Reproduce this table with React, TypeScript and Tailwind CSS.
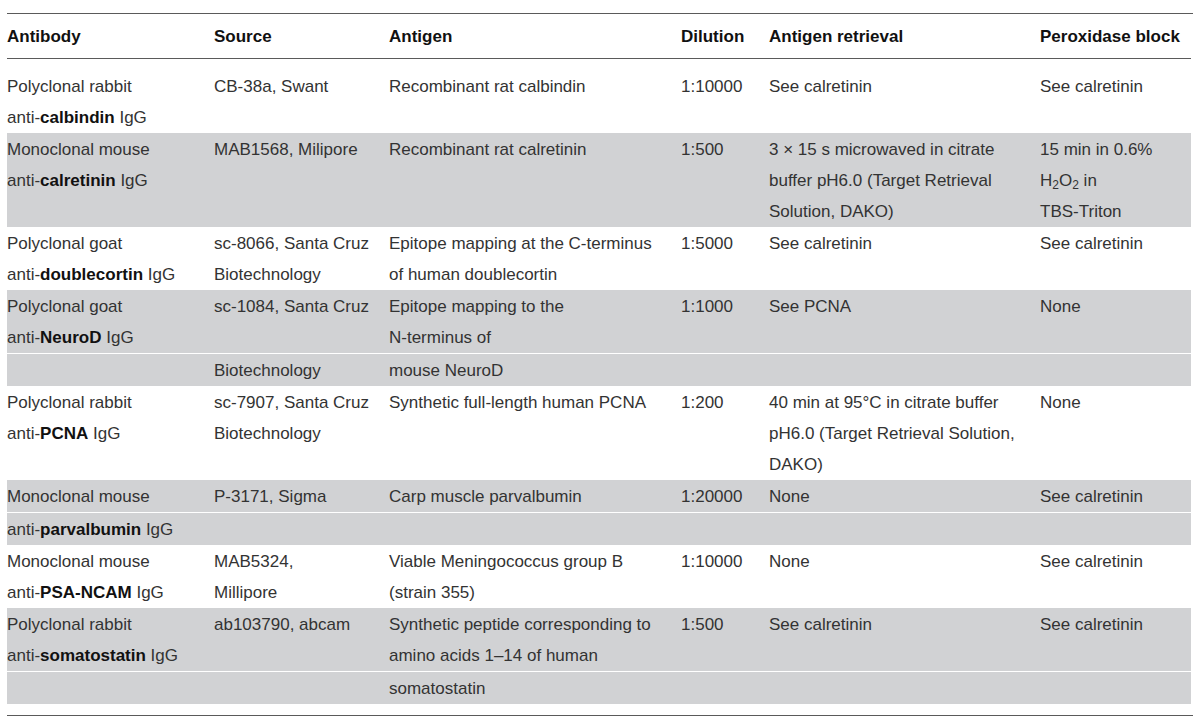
import type { ReactNode } from "react";

type Cell = ReactNode[];
type SubRow = Cell[];

interface Row {
  shaded: boolean;
  parts: SubRow[];
}

const COLS = [207, 175, 292, 88, 271, 151];
const HEADERS = ["Antibody", "Source", "Antigen", "Dilution", "Antigen retrieval", "Peroxidase block"];

const anti = (name: string) => (
  <>
    anti-<b className="font-bold text-[#111]">{name}</b> IgG
  </>
);

const h2o2 = (
  <>
    H<sub className="text-[12px]">2</sub>O<sub className="text-[12px]">2</sub> in
  </>
);

const ROWS: Row[] = [
  {
    shaded: false,
    parts: [
      [
        ["Polyclonal rabbit", anti("calbindin")],
        ["CB-38a, Swant"],
        ["Recombinant rat calbindin"],
        ["1:10000"],
        ["See calretinin"],
        ["See calretinin"],
      ],
    ],
  },
  {
    shaded: true,
    parts: [
      [
        ["Monoclonal mouse", anti("calretinin")],
        ["MAB1568, Milipore"],
        ["Recombinant rat calretinin"],
        ["1:500"],
        ["3 × 15 s microwaved in citrate", "buffer pH6.0 (Target Retrieval", "Solution, DAKO)"],
        ["15 min in 0.6%", h2o2, "TBS-Triton"],
      ],
    ],
  },
  {
    shaded: false,
    parts: [
      [
        ["Polyclonal goat", anti("doublecortin")],
        ["sc-8066, Santa Cruz", "Biotechnology"],
        ["Epitope mapping at the C-terminus", "of human doublecortin"],
        ["1:5000"],
        ["See calretinin"],
        ["See calretinin"],
      ],
    ],
  },
  {
    shaded: true,
    parts: [
      [
        ["Polyclonal goat", anti("NeuroD")],
        ["sc-1084, Santa Cruz"],
        ["Epitope mapping to the", "N-terminus of"],
        ["1:1000"],
        ["See PCNA"],
        ["None"],
      ],
      [[], ["Biotechnology"], ["mouse NeuroD"], [], [], []],
    ],
  },
  {
    shaded: false,
    parts: [
      [
        ["Polyclonal rabbit", anti("PCNA")],
        ["sc-7907, Santa Cruz", "Biotechnology"],
        ["Synthetic full-length human PCNA"],
        ["1:200"],
        ["40 min at 95°C in citrate buffer", "pH6.0 (Target Retrieval Solution,", "DAKO)"],
        ["None"],
      ],
    ],
  },
  {
    shaded: true,
    parts: [
      [
        ["Monoclonal mouse"],
        ["P-3171, Sigma"],
        ["Carp muscle parvalbumin"],
        ["1:20000"],
        ["None"],
        ["See calretinin"],
      ],
      [[anti("parvalbumin")], [], [], [], [], []],
    ],
  },
  {
    shaded: false,
    parts: [
      [
        ["Monoclonal mouse", anti("PSA-NCAM")],
        ["MAB5324,", "Millipore"],
        ["Viable Meningococcus group B", "(strain 355)"],
        ["1:10000"],
        ["None"],
        ["See calretinin"],
      ],
    ],
  },
  {
    shaded: true,
    parts: [
      [
        ["Polyclonal rabbit", anti("somatostatin")],
        ["ab103790, abcam"],
        ["Synthetic peptide corresponding to", "amino acids 1–14 of human"],
        ["1:500"],
        ["See calretinin"],
        ["See calretinin"],
      ],
      [[], [], ["somatostatin"], [], [], []],
    ],
  },
];

function Lines({ lines }: { lines: Cell }) {
  return (
    <>
      {lines.map((line, i) => (
        <div key={i} className="whitespace-nowrap">
          {line}
        </div>
      ))}
    </>
  );
}

export default function App() {
  return (
    <div
      className="min-h-[722px] w-[1200px] bg-white pt-[13px] text-[17px] text-[#333333]"
      style={{ fontFamily: '"Liberation Sans", Arial, sans-serif' }}
    >
      <div className="ml-[7px] w-[1186px] border-y border-[#5a5a5a] pb-[11px]">
        <table className="w-[1184px] table-fixed border-collapse">
          <colgroup>
            {COLS.map((w, i) => (
              <col key={i} style={{ width: w }} />
            ))}
          </colgroup>
          <thead>
            <tr className="border-b border-[#5a5a5a]">
              {HEADERS.map((h) => (
                <th
                  key={h}
                  className="p-0 pt-[7px] pb-[6px] text-left align-top text-[17px] leading-[31px] font-bold text-[#111]"
                >
                  {h}
                </th>
              ))}
            </tr>
          </thead>
          <tbody>
            {ROWS.map((row, ri) =>
              row.parts.map((part, pi) => (
                <tr
                  key={`${ri}-${pi}`}
                  className={
                    (row.shaded ? "bg-[#d1d2d4] " : "") + (pi > 0 ? "border-t border-white" : "")
                  }
                >
                  {part.map((cell, ci) => (
                    <td
                      key={ci}
                      className={
                        "p-0 align-top leading-[31px] " +
                        (ri === 0 ? "pt-[12px]" : "pt-[1px]") +
                        (cell.length === 0 ? " h-[31px]" : "")
                      }
                    >
                      <Lines lines={cell} />
                    </td>
                  ))}
                </tr>
              )),
            )}
          </tbody>
        </table>
      </div>
    </div>
  );
}
